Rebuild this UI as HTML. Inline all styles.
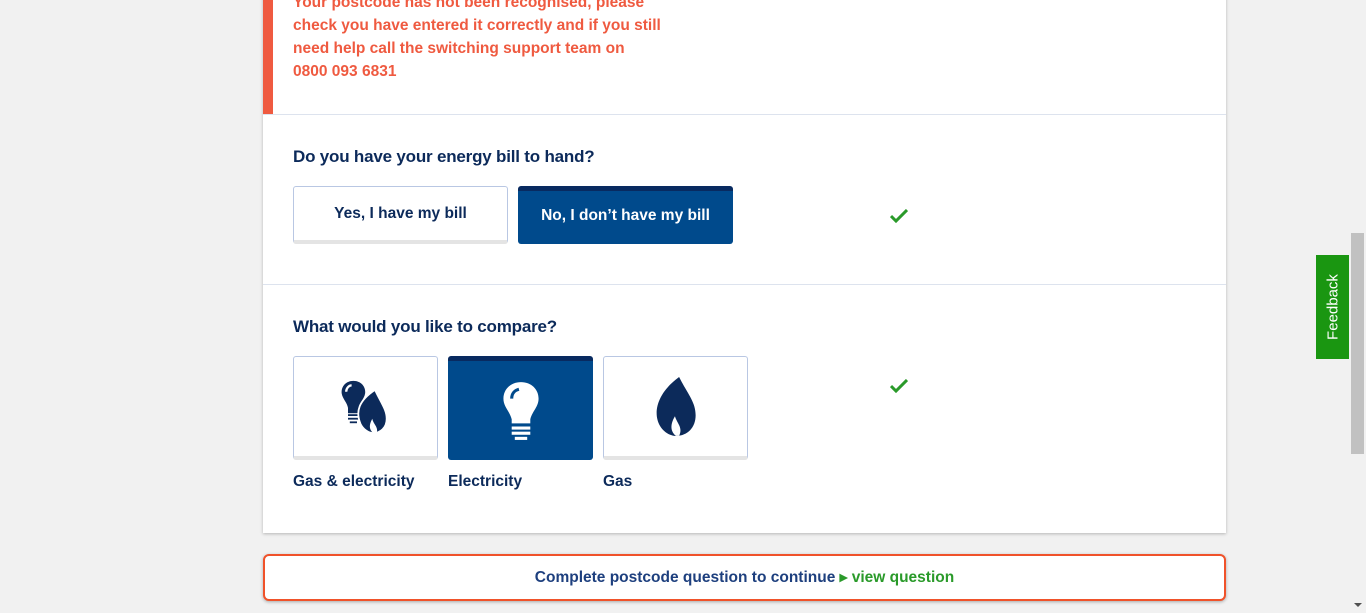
<!DOCTYPE html>
<html><head><meta charset="utf-8"><style>
*{box-sizing:border-box;margin:0;padding:0}
body{width:1366px;height:613px;overflow:hidden;background:#f1f1f1;font-family:"Liberation Sans",sans-serif;position:relative}
.card{position:absolute;left:263px;top:-10px;width:963px;height:543px;background:#fff;box-shadow:0 1px 3px rgba(0,0,0,.25)}
.bar{position:absolute;left:263px;top:0;width:10px;height:114px;background:#ef5a40}
.err{position:absolute;left:293px;top:-9px;color:#ef5a40;font-weight:bold;font-size:15.5px;line-height:23px;white-space:nowrap}
.hr{position:absolute;left:263px;width:963px;height:1px;background:#dde3ee}
h2{position:absolute;left:293px;font-size:17px;color:#0c2a5a;font-weight:bold;letter-spacing:-0.2px}
.btn{position:absolute;height:58px;border:1px solid #b9c7e3;border-radius:3px;background:#fff;border-bottom:4px solid #e4e4e4;color:#0c2a5a;font-weight:bold;font-size:15.5px;display:flex;align-items:center;justify-content:center}
.sel{background:#004a8c;border:none;border-top:5px solid #082a60;color:#fff}
.tick{position:absolute;left:890px;width:18px;height:14px}
.lbl{position:absolute;top:471px;color:#0c2a5a;font-weight:bold;font-size:15.5px}
.foot{position:absolute;left:263px;top:554px;width:963px;height:47px;border:2px solid #f0522a;border-radius:6px;background:#fff;box-shadow:0 1px 3px rgba(0,0,0,.3);text-align:center;font-size:15.5px;font-weight:bold;line-height:43px;color:#1d3f7e}
.sb{position:absolute;right:0;top:0;width:15px;height:613px;background:#f1f1f1}
.thumb{position:absolute;left:1351px;top:233px;width:13px;height:221px;background:#c1c1c1}
.fb{position:absolute;left:1316px;top:255px;width:33px;height:104px;background:#1a9611;color:#fff;font-size:15px}
.fb span{position:absolute;left:50%;top:50%;transform:translate(-50%,-50%) rotate(-90deg);white-space:nowrap}
</style></head><body>
<div class="card"></div>
<div class="bar"></div>
<div class="err">Your postcode has not been recognised, please<br>check you have entered it correctly and if you still<br>need help call the switching support team on<br>0800 093 6831</div>
<div class="hr" style="top:114px"></div>
<h2 style="top:147px">Do you have your energy bill to hand?</h2>
<div class="btn" style="left:293px;top:186px;width:215px">Yes, I have my bill</div>
<div class="btn sel" style="left:518px;top:186px;width:215px;padding-bottom:4px">No, I don’t have my bill</div>
<svg class="tick" style="top:209px" viewBox="0 0 18 14"><path d="M1 7l5 5L17 1" fill="none" stroke="#2a9a2a" stroke-width="3"/></svg>
<div class="hr" style="top:284px"></div>
<h2 style="top:317px">What would you like to compare?</h2>
<div class="btn" style="left:293px;top:356px;width:145px;height:104px">
<svg width="54" height="58" viewBox="0 0 60 62"><path d="M16 2C7 2 2 9 3 16c1 6 6 10 7 16v6h12v-6c1-6 6-10 7-16C30 9 25 2 16 2z" fill="#0c2a5a"/><path d="M8 14c0-4 3-7 6-7" stroke="#fff" stroke-width="2.5" fill="none"/><rect x="10" y="39" width="12" height="2" fill="#0c2a5a"/><rect x="10" y="43" width="12" height="2" fill="#0c2a5a"/><rect x="12" y="47" width="8" height="2" fill="#0c2a5a"/><path d="M40 12C22 24 18 36 24 50c3 6 9 10 14 10 8 0 15-6 15-16 0-10-6-17-13-32z" fill="#0c2a5a" stroke="#fff" stroke-width="2"/><path d="M38 60c-3-3-6-7-1-16 1 6 7 9 5 16z" fill="#fff"/></svg></div>
<div class="btn sel" style="left:448px;top:356px;width:145px;height:104px">
<svg width="42" height="62" viewBox="0 0 40 60"><path d="M20 2C10 2 3 9 3 18c0 8 6 12 8 20v4h18v-4c2-8 8-12 8-20C37 9 30 2 20 2z" fill="#fff"/><path d="M11 18c0-5 3-8 7-9" stroke="#004a8c" stroke-width="3" fill="none"/><rect x="11" y="45" width="18" height="3" fill="#fff"/><rect x="11" y="50" width="18" height="3" fill="#fff"/><rect x="14" y="55" width="12" height="3" fill="#fff"/></svg></div>
<div class="btn" style="left:603px;top:356px;width:145px;height:104px">
<svg width="44" height="62" viewBox="0 0 42 60"><path d="M24 1C6 14 0 30 3 42c2 9 10 16 18 16 11 0 19-8 19-20 0-13-8-21-16-37z" fill="#0c2a5a"/><path d="M21 58c-4-3-7-9-1-19 2 7 8 11 4 19z" fill="#fff"/></svg></div>
<svg class="tick" style="top:379px" viewBox="0 0 18 14"><path d="M1 7l5 5L17 1" fill="none" stroke="#2a9a2a" stroke-width="3"/></svg>
<div class="lbl" style="left:293px;top:473px">Gas &amp; electricity</div>
<div class="lbl" style="left:448px;top:473px">Electricity</div>
<div class="lbl" style="left:603px;top:473px">Gas</div>
<div class="foot">Complete postcode question to continue <span style="color:#2a9a2a">&#9656; view question</span></div>
<div class="sb"></div>
<div class="thumb"></div>
<div style="position:absolute;left:1354px;top:603px;border:4px solid transparent;border-top:4px solid #505050;width:0;height:0"></div>
<div class="fb"><span>Feedback</span></div>
</body></html>
